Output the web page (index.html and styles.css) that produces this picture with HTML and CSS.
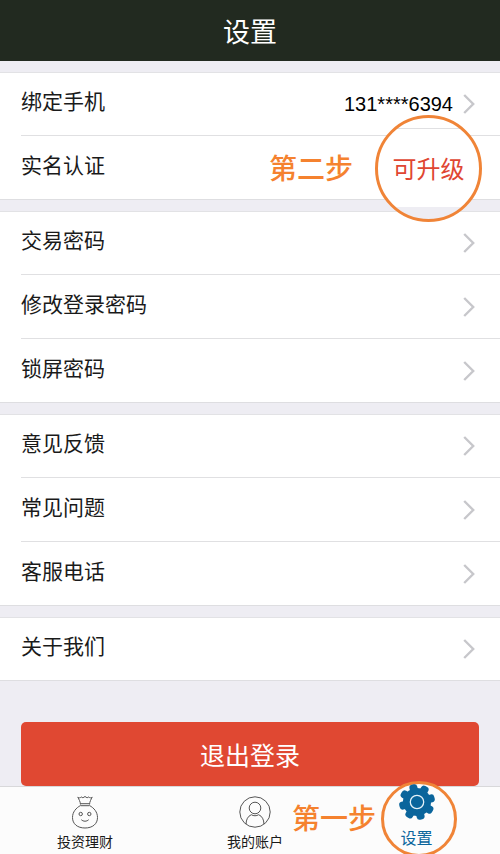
FILE: index.html
```html
<!DOCTYPE html>
<html lang="zh-CN">
<head>
<meta charset="utf-8">
<meta name="viewport" content="width=device-width, initial-scale=1">
<title>设置</title>
<link rel="stylesheet" href="styles.css">
</head>
<body>
<svg class="defs" aria-hidden="true">
  <symbol id="chevron" viewBox="0 0 12 20"><path d="M1.200 1 10.200 10l-9 9" fill="none" stroke="currentColor" stroke-width="2.400"/></symbol>
</svg>
<header class="header"><h1 class="title">设置</h1></header>
<main class="content">
  <section class="group">
    <a class="row" href="#phone"><span class="label">绑定手机</span><span class="value">131****6394</span><svg class="chevron"><use href="#chevron"/></svg></a>
    <a class="row" href="#verify"><span class="label">实名认证</span><span class="step step-two">第二步</span><span class="lens lens-verify">可升级</span></a>
  </section>
  <section class="group">
    <a class="row" href="#trade"><span class="label">交易密码</span><svg class="chevron"><use href="#chevron"/></svg></a>
    <a class="row" href="#login"><span class="label">修改登录密码</span><svg class="chevron"><use href="#chevron"/></svg></a>
    <a class="row" href="#lock"><span class="label">锁屏密码</span><svg class="chevron"><use href="#chevron"/></svg></a>
  </section>
  <section class="group">
    <a class="row" href="#feedback"><span class="label">意见反馈</span><svg class="chevron"><use href="#chevron"/></svg></a>
    <a class="row" href="#faq"><span class="label">常见问题</span><svg class="chevron"><use href="#chevron"/></svg></a>
    <a class="row" href="#service"><span class="label">客服电话</span><svg class="chevron"><use href="#chevron"/></svg></a>
  </section>
  <section class="group">
    <a class="row" href="#about"><span class="label">关于我们</span><svg class="chevron"><use href="#chevron"/></svg></a>
  </section>
  <button class="logout" type="button">退出登录</button>
</main>
<nav class="tabs">
  <a class="tab" href="#invest">
    <svg class="icon" viewBox="0 0 34 34" fill="none" stroke="#555" stroke-width="1">
      <path d="M12.500 9.500C12.300 6.500 11 4.500 9.800 2.200c1.200.9 2.600 1 3.400-.4.8 1.200 2.400 1.200 3.800-.4 1.400 1.600 3 1.600 3.800.4.800 1.400 2.200 1.300 3.400.4-1.200 2.300-2.500 4.300-2.700 7.300"/>
      <path d="M12.500 8.700h9M12.500 10.700h9"/>
      <path d="M12.500 10.500C8 13 4.500 17 4.500 22.500c0 6.500 5 10.500 12.500 10.500s12.500-4 12.500-10.500c0-5.500-3.500-9.500-8-12"/>
      <circle cx="12.700" cy="19" r="1.700"/><circle cx="21.300" cy="19" r="1.700"/>
      <path d="M13.300 24.700c2 2 5.400 2 7.400 0"/>
    </svg>
    <span>投资理财</span>
  </a>
  <a class="tab" href="#account">
    <svg class="icon" viewBox="0 0 34 34" fill="none" stroke="#555" stroke-width="1">
      <circle cx="17" cy="17" r="15.200"/><circle cx="17" cy="13" r="5.800"/>
      <path d="M8 29.200c.2-4.700 1.800-8 5.300-9.500 2.300 1.400 5.100 1.400 7.400 0 3.500 1.500 5.100 4.800 5.300 9.500"/>
    </svg>
    <span>我的账户</span>
  </a>
  <a class="tab tab-active" href="#settings">
    <span class="step step-one">第一步</span>
    <span class="lens lens-settings">
      <svg class="gear" viewBox="-19 -19 38 38">
        <g fill="#0a659c" transform="rotate(-14)">
          <circle r="14"/>
          <rect id="tooth" x="-4" y="-18" width="8" height="12" rx="3"/>
          <use href="#tooth" transform="rotate(45)"/><use href="#tooth" transform="rotate(90)"/>
          <use href="#tooth" transform="rotate(135)"/><use href="#tooth" transform="rotate(180)"/>
          <use href="#tooth" transform="rotate(225)"/><use href="#tooth" transform="rotate(270)"/>
          <use href="#tooth" transform="rotate(315)"/>
        </g>
        <circle r="6.700" fill="none" stroke="#e4f1f8" stroke-width="1.300"/>
      </svg>
      <span>设置</span>
    </span>
  </a>
</nav>
</body>
</html>
```
FILE: styles.css
```css
* {
  box-sizing: border-box;
}

body {
  display: flex;
  flex-direction: column;
  height: 100vh;
  margin: 0;
  background: #eeedf3;
  color: #1a1a1a;
  font-family: "Liberation Sans", "Noto Sans CJK SC", sans-serif;
}

a {
  color: inherit;
  text-decoration: none;
}

.defs {
  position: absolute;
  width: 0;
  height: 0;
}

.header {
  flex: none;
  display: flex;
  align-items: center;
  justify-content: center;
  height: 61px;
  padding-top: 4px;
  background: #222a20;
}

.title {
  margin: 0;
  color: #fff;
  font-size: 27px;
  font-weight: 400;
  line-height: 40px;
}

.content {
  flex: 1;
  min-height: 0;
  display: flex;
  flex-direction: column;
  gap: 11px;
  padding-top: 11px;
  overflow: auto;
}

.group {
  flex: none;
  background: #fff;
  border-bottom: 1px solid #dedee1;
  box-shadow: inset 0 1px #e2e2e5;
}

.row {
  position: relative;
  display: flex;
  align-items: center;
  gap: 10px;
  height: 64px;
  margin-left: 21px;
  padding-right: 25px;
  border-bottom: 1px solid #e0e0e2;
}

.row:last-child {
  height: 63px;
  border-bottom: 0;
}

.label {
  flex: 1;
  padding-bottom: 4px;
  font-size: 21px;
  line-height: 30px;
}

.value {
  color: #000;
  font-size: 20px;
  line-height: 30px;
}

.chevron {
  width: 12px;
  height: 20px;
  color: #c7c7cb;
}

.step {
  position: absolute;
  color: #f5822f;
  font-size: 28px;
  font-weight: 500;
  line-height: 40px;
  white-space: nowrap;
}

.step-two {
  top: 14px;
  right: 147px;
}

.step-one {
  top: 13px;
  right: 80%;
  margin-right: -5px;
}

.lens {
  position: absolute;
  z-index: 1;
  display: flex;
  align-items: center;
  border: 3px solid #f08437;
  border-radius: 50%;
}

.lens-verify {
  top: -21px;
  right: 18px;
  justify-content: center;
  width: 107px;
  height: 107px;
  padding-bottom: 2px;
  background: linear-gradient(#fff 10px, #e0e0e2 10px 11px, #fff 11px 89px, #eeedf3 89px);
  color: #e04632;
  font-size: 24px;
}

.logout {
  flex: none;
  height: 64px;
  margin: 30px 21px 0;
  padding: 0;
  border: 0;
  border-radius: 5px;
  background: #e04832;
  color: #fff;
  font-family: inherit;
  font-size: 25px;
}

.tabs {
  flex: none;
  display: grid;
  grid-template-columns: 34fr 34fr 31fr;
  height: 68px;
  padding-right: 5px;
  border-top: 1px solid #d8d8da;
  background: #fcfcfc;
}

.tab {
  position: relative;
  display: flex;
  flex-direction: column;
  align-items: center;
  gap: 3px;
  padding-top: 8px;
  font-size: 14px;
  line-height: 20px;
}

.icon {
  width: 34px;
  height: 34px;
}

.lens-settings {
  top: -6px;
  left: 50%;
  flex-direction: column;
  gap: 8px;
  width: 76px;
  height: 76px;
  margin-left: -37px;
  background: #fcfcfc;
  color: #0a659c;
  font-size: 16px;
}

.gear {
  flex: none;
  width: 38px;
  height: 38px;
  margin: -1px 4px 0 0;
}

.lens-settings span {
  padding-right: 4px;
}

.tab-active {
  clip-path: inset(-10px -10px 0 -100px);
}
```
